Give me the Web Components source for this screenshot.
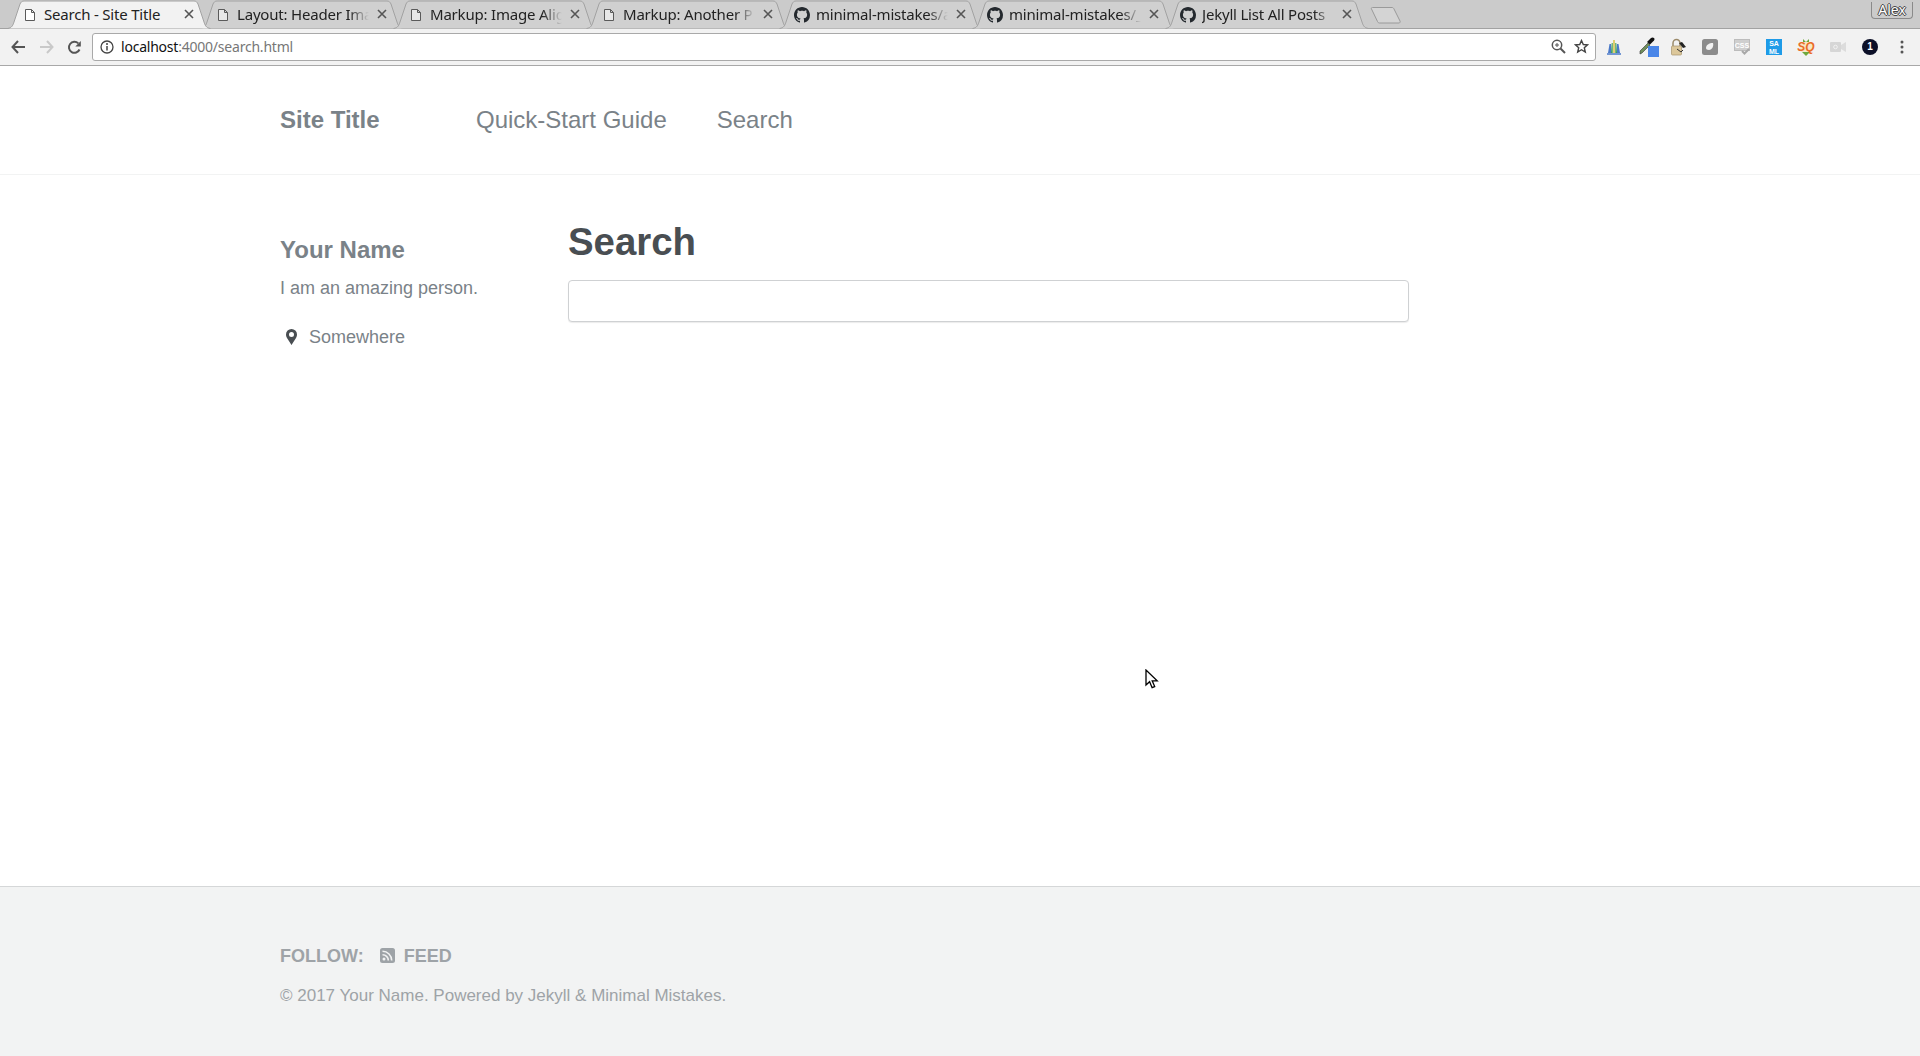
<!DOCTYPE html>
<html lang="en">
<head>
<meta charset="utf-8">
<title>Search - Site Title</title>
<style>
html, body { margin: 0; height: 100%; overflow: hidden; background: #fff; }
</style>
</head>
<body>
<site-page>
    <browser-chrome></browser-chrome>
    <site-masthead></site-masthead>
    <search-layout></search-layout>
    <site-footer></site-footer>
</site-page>

<script>
const GITHUB_PATH = "M8 0C3.58 0 0 3.58 0 8c0 3.54 2.29 6.53 5.47 7.59.4.07.55-.17.55-.38 0-.19-.01-.82-.01-1.49-2.01.37-2.53-.49-2.69-.94-.09-.23-.48-.94-.82-1.13-.28-.15-.68-.52-.01-.53.63-.01 1.08.58 1.23.82.72 1.21 1.87.87 2.33.66.07-.52.28-.87.51-1.07-1.78-.2-3.64-.89-3.64-3.95 0-.87.31-1.59.82-2.15-.08-.2-.36-1.02.08-2.12 0 0 .67-.21 2.2.82.64-.18 1.32-.27 2-.27.68 0 1.36.09 2 .27 1.53-1.04 2.2-.82 2.2-.82.44 1.1.16 1.92.08 2.12.51.56.82 1.27.82 2.15 0 3.07-1.87 3.75-3.65 3.95.29.25.54.73.54 1.48 0 1.07-.01 1.93-.01 2.2 0 .21.15.46.55.38A8.013 8.013 0 0016 8c0-4.42-3.58-8-8-8z";

class SitePage extends HTMLElement{
    constructor(){
        super();
        this.attachShadow({mode: "open"}).innerHTML = `
            <style>
                :host {
                    display: flex;
                    flex-direction: column;
                    height: 1056px;
                    position: relative;
                    font-family: "Liberation Sans", Arial, sans-serif;
                }
                .cursor {
                    position: absolute;
                    left: 1145px;
                    top: 669px;
                }
            </style>
            <slot></slot>
            <svg class="cursor" width="14" height="21" viewBox="0 0 14 21">
                <path d="M1 1v15l3.6-3.3 2.5 6 2.6-1.1-2.5-5.8h5z" fill="#fff" stroke="#000" stroke-width="1.3"/>
            </svg>`;
    }
}

class ChromeTab extends HTMLElement{
    constructor(){
        super();
        this._shadowDOM = this.attachShadow({mode: "open"});
    }

    connectedCallback(){
        this.render();
    }

    render(){
        const active = this.hasAttribute("active");
        const icon = this.getAttribute("icon") === "github"
            ? `<svg class="icon" width="16" height="16" viewBox="0 0 16 16"><path d="${GITHUB_PATH}" fill="#24292e"/></svg>`
            : `<svg class="icon" width="16" height="16" viewBox="0 0 16 16"><path d="M3.5 2.5h6l3 3v8h-9z M9.5 2.5v3h3" fill="${active ? "#fff" : "#e8e8e8"}" stroke="#5a5a5a"/></svg>`;
        this._shadowDOM.innerHTML = `
            <style>
                :host {
                    display: block;
                    position: relative;
                    width: 204px;
                    height: 28px;
                    margin-left: -11px;
                    flex: none;
                }
                :host([active]) { z-index: 2; }
                .shape {
                    position: absolute;
                    left: 0;
                    top: 0;
                }
                .inner {
                    position: relative;
                    display: flex;
                    align-items: center;
                    height: 28px;
                    padding: 0 0 0 15px;
                }
                .icon { flex: none; margin-top: 1px; }
                .label {
                    width: 141px;
                    margin-left: 6px;
                    white-space: nowrap;
                    font: 15px "Noto Sans", sans-serif;
                    letter-spacing: -0.2px;
                    color: #222;
                    -webkit-mask-image: linear-gradient(to right, #000 112px, transparent 132px);
                    mask-image: linear-gradient(to right, #000 112px, transparent 132px);
                }
                :host([active]) .label {
                    -webkit-mask-image: none;
                    mask-image: none;
                }
                .close { flex: none; margin-left: -1px; }
            </style>
            <svg class="shape" width="204" height="29" viewBox="0 0 204 29">
                <path d="M0.5 28.5C5 28 6 25 7 22L13 4C14 2 15 1 17 1H187C189 1 190 2 191 4L197 22C198 25 199 28 203.5 28.5"
                    fill="${active ? "#f2f2f2" : "#d0d0d0"}" stroke="#a2a2a2"/>
            </svg>
            <div class="inner">
                ${icon}
                <span class="label">${this.getAttribute("label")}</span>
                <svg class="close" width="10" height="10" viewBox="0 0 10 10">
                    <path d="M1 1l8 8M9 1l-8 8" stroke="#555" stroke-width="1.6"/>
                </svg>
            </div>`;
    }
}

class ToolbarSlot extends HTMLElement{
    constructor(){
        super();
        this.attachShadow({mode: "open"}).innerHTML = `
            <style>
                :host {
                    display: flex;
                    width: 32px;
                    height: 36px;
                    align-items: center;
                    justify-content: center;
                    position: relative;
                    flex: none;
                }
            </style>
            <slot></slot>`;
    }
}

class BrowserChrome extends HTMLElement{
    constructor(){
        super();
        this.attachShadow({mode: "open"}).innerHTML = `
            <style>
                :host {
                    display: block;
                    flex: none;
                    height: 66px;
                    background: #f2f2f2;
                    font-family: "Noto Sans", sans-serif;
                }
                .strip {
                    display: flex;
                    align-items: flex-start;
                    height: 28px;
                    padding-left: 18px;
                    background: #cbcbcb;
                    border-bottom: 1px solid #a2a2a2;
                    position: relative;
                }
                .new-tab { margin: 7px 0 0 -1px; flex: none; }
                .profile {
                    position: absolute;
                    right: 7px;
                    top: 2px;
                    width: 42px;
                    height: 17px;
                    box-sizing: border-box;
                    border: 1px solid #8a8a8a;
                    border-top: 0;
                    border-radius: 0 0 4px 4px;
                    text-align: center;
                    font-size: 14px;
                    line-height: 15px;
                    color: #fff;
                    text-shadow: 1px 0 0 #444, -1px 0 0 #444, 0 1px 0 #444, 0 -1px 0 #444;
                }
                .bar {
                    display: flex;
                    align-items: center;
                    height: 36px;
                    border-bottom: 1px solid #a8a8a8;
                    padding-right: 2px;
                }
                .nav { display: flex; align-items: center; width: 92px; flex: none; }
                .nav svg { flex: none; }
                .omnibox {
                    flex: 1;
                    display: flex;
                    align-items: center;
                    height: 28px;
                    margin-top: -1px;
                    box-sizing: border-box;
                    background: #fff;
                    border: 1px solid #a9a9a9;
                    border-radius: 3px;
                    margin-right: 2px;
                    padding: 0 6px 0 7px;
                }
                .url {
                    flex: 1;
                    margin-left: 7px;
                    font-size: 14px;
                    letter-spacing: -0.22px;
                    color: #777;
                }
                .url b { font-weight: 400; color: #111; }
                .omnibox svg { flex: none; }
                .mini {
                    display: block;
                    font: bold 9px/9px "Liberation Sans", sans-serif;
                    text-align: center;
                }
                .saml {
                    width: 16px;
                    height: 16px;
                    background: #1e9be8;
                    color: #fff;
                    font-size: 7px;
                    line-height: 7.5px;
                    padding-top: 1px;
                    box-sizing: border-box;
                }
                .badge {
                    width: 16px;
                    height: 16px;
                    border-radius: 50%;
                    background: #0c1028;
                    color: #fff;
                    font-size: 10px;
                    line-height: 16px;
                }
            </style>
            <div class="strip">
                <chrome-tab active icon="doc" label="Search - Site Title"></chrome-tab>
                <chrome-tab icon="doc" label="Layout: Header Ima"></chrome-tab>
                <chrome-tab icon="doc" label="Markup: Image Alig"></chrome-tab>
                <chrome-tab icon="doc" label="Markup: Another P"></chrome-tab>
                <chrome-tab icon="github" label="minimal-mistakes/a"></chrome-tab>
                <chrome-tab icon="github" label="minimal-mistakes/_"></chrome-tab>
                <chrome-tab icon="github" label="Jekyll List All Posts"></chrome-tab>
                <svg class="new-tab" width="36" height="17" viewBox="0 0 36 17">
                    <path d="M4.5.5H24c1 0 1.500.5 2 1.500l6 12c.5 1-.2 2-1 2H11.500c-1 0-1.500-.5-2-1.500L3.500 2C3 1 3.500.5 4.500.5z" fill="#d4d4d4" stroke="#9a9a9a"/>
                </svg>
                <div class="profile">Alex</div>
            </div>
            <div class="bar">
                <div class="nav">
                    <svg style="margin-left:11px" width="15" height="14" viewBox="0 0 15 14"><path d="M7 1L1.500 7 7 13M1.500 7H14" fill="none" stroke="#555" stroke-width="2"/></svg>
                    <svg style="margin-left:13px" width="15" height="14" viewBox="0 0 15 14"><path d="M8 1l5.500 6L8 13M13.500 7H1" fill="none" stroke="#c9c9c9" stroke-width="2"/></svg>
                    <svg style="margin-left:13px" width="15" height="15" viewBox="0 0 15 15"><path d="M12.500 9.500A5.500 5.500 0 1 1 11.300 3.400" fill="none" stroke="#555" stroke-width="2"/><path d="M13.800 1v5.500H8.300z" fill="#555"/></svg>
                </div>
                <div class="omnibox">
                    <svg width="14" height="14" viewBox="0 0 14 14"><circle cx="7" cy="7" r="6" fill="none" stroke="#444" stroke-width="1.300"/><path d="M7 6v4.500" stroke="#444" stroke-width="1.500"/><circle cx="7" cy="4" r="1" fill="#444"/></svg>
                    <span class="url"><b>localhost</b>:4000/search.html</span>
                    <svg width="15" height="15" viewBox="0 0 15 15" style="margin-right:8px"><circle cx="6" cy="6" r="4.700" fill="none" stroke="#555" stroke-width="1.500"/><path d="M9.500 9.500l4.500 4.500" stroke="#555" stroke-width="2"/><path d="M4 6h4M6 4v4" stroke="#555"/></svg>
                    <svg width="15" height="15" viewBox="0 0 15 15"><path d="M7.500 1.500l1.800 4 4.200.4-3.200 2.800 1 4.300-3.800-2.300-3.800 2.300 1-4.300L1.500 5.900l4.200-.4z" fill="none" stroke="#444" stroke-width="1.400"/></svg>
                </div>
                <toolbar-slot>
                    <svg width="16" height="16" viewBox="0 0 16 16"><path d="M1 15h14" stroke="#4a78c8" stroke-width="1.500"/><path d="M3.500 5h1.500v9H2z M11 5h1.500l1.500 9h-3z" fill="#4a78c8"/><path d="M5.700 4h1v10H5z M9.300 4h1l.7 10H9.300z" fill="#3a9a56"/><path d="M7.300 1h1.400v13H7.300z" fill="#d9c13a"/></svg>
                </toolbar-slot>
                <toolbar-slot>
                    <svg width="24" height="22" viewBox="0 0 24 22" style="margin-left:8px"><path d="M2 15l8-8 2 2-8 8-2 1z" fill="#6f8f5a" stroke="#333" stroke-width=".6"/><path d="M9 6l4-4c1-1 2.500-.5 3 0s.8 1.500 0 2.500l-4 4z" fill="#111"/><rect x="10" y="10" width="11" height="11" fill="#4a86e8"/></svg>
                </toolbar-slot>
                <toolbar-slot>
                    <svg width="18" height="18" viewBox="0 0 18 18"><path d="M4 8V5a3.500 3.500 0 0 1 7 0v3" fill="none" stroke="#9b8a6a" stroke-width="1.500"/><rect x="2.500" y="8" width="10" height="9" rx="1" fill="#dcc79a" stroke="#a8946c" stroke-width=".7"/><path d="M10 5l4 5 3-1-4-5z" fill="#222"/><path d="M8 11l4 3 2-2" fill="none" stroke="#333"/></svg>
                </toolbar-slot>
                <toolbar-slot>
                    <svg width="16" height="16" viewBox="0 0 16 16"><rect width="16" height="16" rx="2.500" fill="#8c8c8c"/><path d="M4 9c0-3 3-5 7-5 1 3-1 7-4 7-2 0-3-1-3-2z" fill="#f2f2f2"/></svg>
                </toolbar-slot>
                <toolbar-slot>
                    <svg width="16" height="16" viewBox="0 0 16 16"><rect x=".5" y=".5" width="15" height="11" fill="#cfcfcf" stroke="#bcbcbc"/><text x="8" y="8.500" text-anchor="middle" font-family="Liberation Sans" font-weight="700" font-size="7" fill="#fff">CSS</text><path d="M8 12l2.500 2.500 4.500-4.500" fill="none" stroke="#a8a8a8" stroke-width="2"/></svg>
                </toolbar-slot>
                <toolbar-slot><span class="mini saml">SA<br>ML</span></toolbar-slot>
                <toolbar-slot>
                    <svg width="18" height="18" viewBox="0 0 18 18"><path d="M6 1l3 3 3-3v4H6zM5 14h8l-2 2-2 2-2-2z" fill="#6fa83c"/><rect x="3" y="4" width="12" height="10" rx="2" fill="#f7e6c4"/><text x="9" y="13" text-anchor="middle" font-family="Liberation Sans" font-style="italic" font-weight="700" font-size="12" fill="#ea6d27">SQ</text></svg>
                </toolbar-slot>
                <toolbar-slot>
                    <svg width="16" height="12" viewBox="0 0 16 12"><rect x="0" y="1" width="11" height="10" rx="1" fill="#d6d6d6"/><path d="M11 4l5-3v10l-5-3z" fill="#dcdcdc"/><circle cx="5.500" cy="6" r="1.800" fill="none" stroke="#f2f2f2"/></svg>
                </toolbar-slot>
                <toolbar-slot><span class="mini badge">1</span></toolbar-slot>
                <toolbar-slot>
                    <svg width="4" height="14" viewBox="0 0 4 14"><circle cx="2" cy="2" r="1.500" fill="#555"/><circle cx="2" cy="7" r="1.500" fill="#555"/><circle cx="2" cy="12" r="1.500" fill="#555"/></svg>
                </toolbar-slot>
            </div>`;
    }
}

class SiteMasthead extends HTMLElement{
    constructor(){
        super();
        this.attachShadow({mode: "open"}).innerHTML = `
            <style>
                :host {
                    display: block;
                    flex: none;
                    height: 109px;
                    box-sizing: border-box;
                    border-bottom: 1px solid #f2f3f3;
                }
                nav {
                    display: flex;
                    align-items: center;
                    height: 108px;
                    padding-left: 280px;
                    font-size: 24px;
                    color: #7a8288;
                }
                .title { font-weight: 700; width: 196px; }
                .link { margin-right: 50px; }
            </style>
            <nav>
                <span class="title">Site Title</span>
                <span class="link">Quick-Start Guide</span>
                <span class="link">Search</span>
            </nav>`;
    }
}

class AuthorProfile extends HTMLElement{
    constructor(){
        super();
        this.attachShadow({mode: "open"}).innerHTML = `
            <style>
                :host {
                    display: block;
                    width: 288px;
                    flex: none;
                    padding-top: 60px;
                    box-sizing: border-box;
                }
                h3 {
                    margin: 0;
                    font-size: 24px;
                    line-height: 30px;
                    color: #7a8288;
                }
                p {
                    margin: 9px 0 0;
                    font-size: 18px;
                    line-height: 28px;
                    color: #7a8288;
                }
                .location {
                    display: flex;
                    align-items: center;
                    margin-top: 21px;
                    font-size: 18px;
                    line-height: 28px;
                    color: #7a8288;
                }
                svg { margin: 0 12px 0 6px; flex: none; }
            </style>
            <h3>Your Name</h3>
            <p>I am an amazing person.</p>
            <div class="location">
                <svg width="11" height="16" viewBox="0 0 11 16"><path fill-rule="evenodd" d="M5.500 0A5.500 5.500 0 0 0 0 5.500C0 7 .5 8 1 9l4.500 7L10 9c.5-1 1-2 1-3.500A5.500 5.500 0 0 0 5.500 0zm0 3a2.500 2.500 0 1 1 0 5 2.500 2.500 0 0 1 0-5z" fill="#494e52"/></svg>
                Somewhere
            </div>`;
    }
}

class SearchLayout extends HTMLElement{
    constructor(){
        super();
        this.attachShadow({mode: "open"}).innerHTML = `
            <style>
                :host {
                    display: flex;
                    flex: 1;
                    padding-left: 280px;
                }
                main { width: 841px; padding-top: 42px; }
                h1 {
                    margin: 0;
                    font-size: 38.4px;
                    line-height: 50px;
                    color: #494e52;
                }
                input {
                    display: block;
                    width: 100%;
                    height: 42px;
                    margin-top: 13px;
                    box-sizing: border-box;
                    background: #fff;
                    border: 1px solid #cfd1d3;
                    border-radius: 4px;
                    box-shadow: 0 1px 1px rgba(0, 0, 0, 0.08);
                    outline: none;
                }
            </style>
            <author-profile></author-profile>
            <main>
                <h1>Search</h1>
                <input type="text" aria-label="Search">
            </main>`;
    }
}

class SiteFooter extends HTMLElement{
    constructor(){
        super();
        this.attachShadow({mode: "open"}).innerHTML = `
            <style>
                :host {
                    display: block;
                    flex: none;
                    height: 170px;
                    box-sizing: border-box;
                    background: #f2f3f3;
                    border-top: 1px solid #d5d7d8;
                    padding: 55px 0 0 280px;
                    color: #9ea3a7;
                }
                .follow {
                    display: flex;
                    align-items: center;
                    font-size: 18px;
                    font-weight: 700;
                    line-height: 28px;
                }
                svg { margin: -2px 9px 0 16px; flex: none; }
                .copy {
                    margin-top: 12px;
                    font-size: 17px;
                    line-height: 28px;
                }
            </style>
            <div class="follow">
                <span>FOLLOW:</span>
                <svg width="15" height="15" viewBox="0 0 15 15">
                    <rect width="15" height="15" rx="2.500" fill="#9ea3a7"/>
                    <circle cx="4" cy="11" r="1.500" fill="#f2f3f3"/>
                    <path d="M2.500 6.700a5.800 5.800 0 0 1 5.800 5.800M2.500 3.300a9.200 9.200 0 0 1 9.200 9.200" fill="none" stroke="#f2f3f3" stroke-width="1.600"/>
                </svg>
                <span>FEED</span>
            </div>
            <div class="copy">© 2017 Your Name. Powered by Jekyll &amp; Minimal Mistakes.</div>`;
    }
}

customElements.define("site-page", SitePage);
customElements.define("chrome-tab", ChromeTab);
customElements.define("toolbar-slot", ToolbarSlot);
customElements.define("browser-chrome", BrowserChrome);
customElements.define("site-masthead", SiteMasthead);
customElements.define("author-profile", AuthorProfile);
customElements.define("search-layout", SearchLayout);
customElements.define("site-footer", SiteFooter);
</script>
</body>
</html>
